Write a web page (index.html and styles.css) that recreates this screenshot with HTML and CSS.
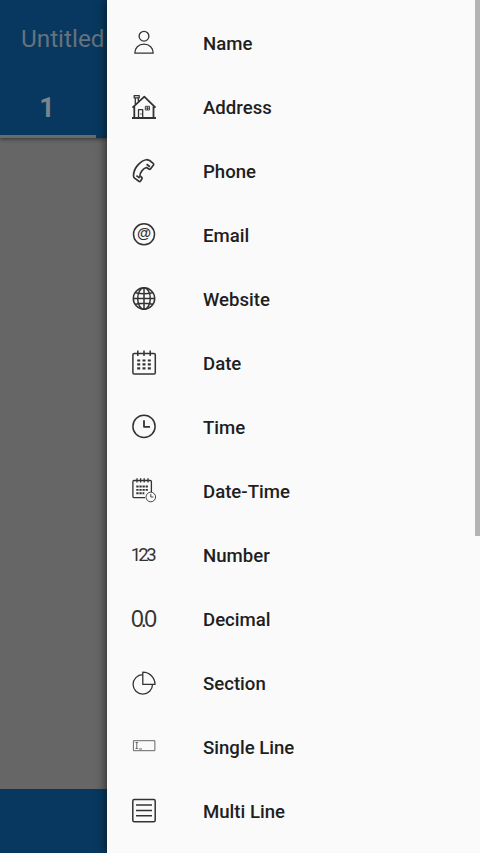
FILE: index.html
```html
<!DOCTYPE html>
<html lang="en">
<head>
<meta charset="utf-8">
<title>Form fields</title>
<link rel="stylesheet" href="styles.css">
</head>
<body>
<div class="screen">
  <div class="page">
    <header class="header">
      <div class="title">Untitled</div>
      <div class="tab">1</div>
    </header>
    <div class="canvas"></div>
    <div class="footer"></div>
  </div>
  <nav class="drawer">
    <ul class="list">
      <li class="item"><svg class="icon" viewBox="0 0 32 32"><circle cx="16" cy="9.2" r="4.9"/><path d="M6.8 26.2c0-5.4 3.6-9 9.2-9s9.2 3.600 9.200 9z"/></svg><span class="label">Name</span></li>
      <li class="item"><svg class="icon" viewBox="0 0 32 32"><path class="bold" d="M4.500 16.600 16.300 5.600 27.500 16.600M6.300 15.500V26.500M25.500 15.500V26.500M4 27H28"/><path d="M7.300 13V6.800M10.300 10.500V6.800M6.200 4.600h5v2.200h-5zM10.500 26.500V18.700h4.200v7.800"/><path class="thin" d="M17.300 15.300h4.200v3.700h-4.200zM19.400 15.300v3.700M17.300 17.200h4.200"/><path d="M13 22.600v.8"/></svg><span class="label">Address</span></li>
      <li class="item"><svg class="icon" viewBox="0 0 32 32"><path class="heavy" d="M19.200 4.500C12.800 5.400 5.600 12.700 5.500 20.700q0 1.700 1.400 2.700l4 2.900q1 .6 1.700-.4l1.400-2.100q.5-1-.4-1.600l-1.700-1.300c.1-3.600 3.200-7.400 6.600-8.400l2.400 1.500q1 .7 1.700-.3l2.900-3.700q.6-1-.3-1.600l-3.600-2.900q-1-.7-2.400-.6zM18.600 9.200l3.300 2.500M8.400 20.600l3.300 2.400"/></svg><span class="label">Phone</span></li>
      <li class="item"><svg class="icon" viewBox="0 0 32 32"><circle class="mid" cx="16" cy="15.300" r="10.500"/><text class="at" x="16" y="19.200">@</text></svg><span class="label">Email</span></li>
      <li class="item"><svg class="icon" viewBox="0 0 32 32"><g class="mid"><circle cx="16" cy="15.500" r="10.700"/><ellipse cx="16" cy="15.500" rx="6.300" ry="10.700"/><path d="M16 4.800v21.400M5.300 15.500h21.400M7.500 9.700q8.500 2 17 0M7.500 21.300q8.500-2 17 0"/></g></svg><span class="label">Website</span></li>
      <li class="item"><svg class="icon" viewBox="0 0 32 32"><rect class="mid" x="4.900" y="6.400" width="22.400" height="20.600" rx="1.300"/><path class="mid" d="M9.800 3.500V9M16 3.500V9M22.200 3.500V9"/><path class="dots" d="M9.200 13.500h13.600M9.200 17.400h13.600M9.200 21.300h13.600"/></svg><span class="label">Date</span></li>
      <li class="item"><svg class="icon" viewBox="0 0 32 32"><circle class="mid" cx="16" cy="15.400" r="11.100"/><path class="bold" d="M16 9.300v6.500h6"/></svg><span class="label">Time</span></li>
      <li class="item"><svg class="icon" viewBox="0 0 32 32"><path d="M17 22.600H6q-1.100 0-1.100-1.100V6.600q0-1.100 1.100-1.100h16.300q1.100 0 1.100 1.100V17M9 3.300v4.300M12.600 3.300v4.300M16.200 3.300v4.300M20 3.300v4.300"/><path class="small-dots" d="M8.300 11.500h11.600M8.300 14.900h11.600M8.300 18.300h8"/><circle class="thin" cx="22.800" cy="22" r="4.800"/><path class="thin" d="M22.800 19v3h2.600"/></svg><span class="label">Date-Time</span></li>
      <li class="item"><svg class="icon" viewBox="0 0 32 32"><text class="digits" x="2.800 10.200 18.200" y="22.300">123</text></svg><span class="label">Number</span></li>
      <li class="item"><svg class="icon" viewBox="0 0 32 32"><text class="decimal" x="3 12.400 16.200" y="23.500">0.0</text></svg><span class="label">Decimal</span></li>
      <li class="item"><svg class="icon" viewBox="0 0 32 32"><path d="M14.700 7.700A9.700 9.700 0 1 0 24.500 17.400M14.800 5.200V17.400H27A12.200 12.200 0 0 0 14.800 5.200z"/></svg><span class="label">Section</span></li>
      <li class="item"><svg class="icon" viewBox="0 0 32 32"><g class="field"><rect x="5.400" y="9.700" width="21.500" height="10"/><path d="M7.500 11.500h2.600M8.800 11.500v6M7.500 17.500h2.600M11 18h3"/></g></svg><span class="label">Single Line</span></li>
      <li class="item"><svg class="icon" viewBox="0 0 32 32"><rect class="mid" x="4.800" y="4.400" width="22.400" height="22.300" rx="1.500"/><path class="mid" d="M8 9.900h16M8 15.400h16M8 20.800h16"/></svg><span class="label">Multi Line</span></li>
    </ul>
    <div class="scrollbar"></div>
  </nav>
</div>
</body>
</html>
```
FILE: styles.css
```css
* { box-sizing: border-box; }
body { margin: 0; font-family: Roboto, "Liberation Sans", sans-serif; }
.screen { display: flex; width: 480px; height: 853px; overflow: hidden; }
.page { display: flex; flex-direction: column; width: 107px; overflow: hidden; background: #666; }
.header { height: 138px; background: #08385f; flex: none; box-shadow: 0 1px 4px rgba(0, 0, 0, .5); }
.title { height: 77px; padding-left: 21px; font-size: 24.300px; line-height: 78px; color: #66727c; white-space: nowrap; }
.tab { width: 96px; height: 61px; padding-right: 2px; border-bottom: 3px solid #666b6e; text-align: center; font-size: 27px; font-weight: 700; line-height: 63px; color: #7a858d; }
.canvas { flex: 1; }
.footer { height: 64px; background: #08385f; }
.drawer { position: relative; flex: 1; background: #fafafa; box-shadow: 0 0 10px rgba(0, 0, 0, .7); }
.list { margin: 0; padding: 11px 0 0; list-style: none; }
.item { display: flex; align-items: center; gap: 43px; height: 64px; padding-left: 21px; font-size: 18.600px; font-weight: 500; line-height: 24px; color: #1f1f1f; }
.label { padding-top: 2px; }
.icon { width: 32px; height: 32px; flex: none; overflow: visible; fill: none; stroke: #333; stroke-width: 1.300; stroke-linejoin: round; }
.thin { stroke-width: .9; }
.mid { stroke-width: 1.500; }
.bold { stroke-width: 1.800; }
.heavy { stroke-width: 1.700; }
.dots { stroke-width: 2.200; stroke-dasharray: 3 2.300; }
.small-dots { stroke-width: 1.900; stroke-dasharray: 2.300 .8; }
.field { stroke: #666; stroke-width: 1; }
.icon text { fill: #333; stroke: none; }
.at { font: 700 14.500px "Liberation Sans", sans-serif; text-anchor: middle; }
.digits { font: 400 18.500px Roboto, sans-serif; }
.decimal { font: 400 23px "Liberation Sans", sans-serif; }
.scrollbar { position: absolute; top: 0; right: 0; width: 5px; height: 536px; background: #b3b3b3; }
```
